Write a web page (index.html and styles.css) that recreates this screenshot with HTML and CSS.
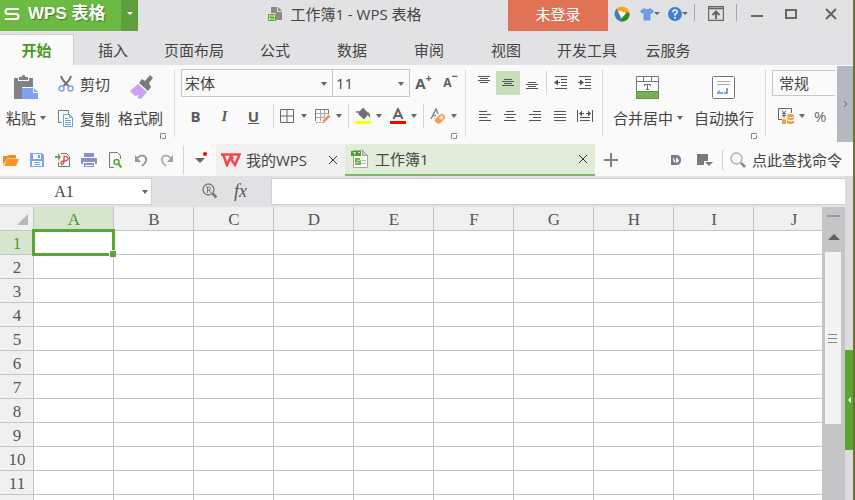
FILE: index.html
```html
<!DOCTYPE html>
<html lang="zh-CN">
<head>
    <meta charset="UTF-8">
    <title>工作簿1 - WPS 表格</title>
    <link rel="stylesheet" href="styles.css">
</head>

<body>

<div class="app">

    <!-- Title bar -->
    <header class="titlebar">
        <button class="brand">
            <svg width="16" height="14" viewBox="0 0 16 14" fill="none" stroke="#fff" stroke-width="2"><path d="M15 2H4Q1.500 2 1.500 4.500T4 7H12Q14.500 7 14.500 9.500T12 12H1"/></svg>
            WPS 表格
        </button>
        <button class="brand-menu" aria-label="菜单"><span class="caret light"></span></button>
        <div class="doc-title">
            <svg width="16" height="16" viewBox="0 0 16 16"><path fill="#8a8a8a" d="M3 1h6v5h5v8H8V7H3zM10 1l4 4h-4z"/><path fill="#e2edda" stroke="#5aa632" d="M.5 8.500h7v6h-7z"/><path fill="none" stroke="#5aa632" d="M6 10H2v1.500h4V13H2"/></svg>
            <span>工作簿1 - WPS 表格</span>
        </div>
        <button class="login">未登录</button>
        <div class="title-tools">
            <button aria-label="云办公">
                <svg width="16" height="16" viewBox="0 0 16 16"><circle cx="8" cy="8" r="7.500" fill="#f7a51c"/><path fill="#2f80c8" d="M3 2.500A7.500 7.500 0 0 0 6 15L8 12 4 7z"/><path fill="#278a24" d="M6 15.200A7.500 7.500 0 0 0 15.500 7L12 6z"/><path fill="#fff" d="M4.500 4.500 12.500 7 7 12.500z"/></svg>
            </button>
            <button aria-label="皮肤">
                <svg width="14" height="14" viewBox="0 0 14 14"><path fill="#6f9be6" d="M4 1q3 2.500 6 0l4 3-2 3-1.500-1v7.500h-7V6L2 7 0 4z"/></svg>
                <span class="caret"></span>
            </button>
            <button aria-label="帮助">
                <svg width="14" height="14" viewBox="0 0 14 14"><circle cx="7" cy="7" r="7" fill="#3d7fd6"/><path d="M4.800 5.300Q5 3 7 3t2.200 2Q9.200 6.200 7 7.200v1.500" fill="none" stroke="#fff" stroke-width="1.500"/><circle cx="7" cy="10.700" r="1" fill="#fff"/></svg>
                <span class="caret"></span>
            </button>
            <i class="sep"></i>
            <button class="wide" aria-label="隐藏功能区">
                <svg width="16" height="15" viewBox="0 0 16 15" fill="none" stroke="#666"><path d="M.5.500h15v14H.5zM1 2.500h14" stroke-width="1.300"/><path d="M8 13V6M4.500 9 8 5.500 11.500 9" stroke-width="2"/></svg>
            </button>
            <i class="sep"></i>
            <div class="window-buttons">
                <button aria-label="最小化">
                    <svg width="12" height="12" viewBox="0 0 12 12"><path fill="#666" d="M0 7h12v2H0z"/></svg>
                </button>
                <button aria-label="最大化">
                    <svg width="12" height="12" viewBox="0 0 12 12"><path fill="none" stroke="#666" stroke-width="2" d="M1 2h10v8H1z"/></svg>
                </button>
                <button class="close" aria-label="关闭">
                    <svg width="12" height="12" viewBox="0 0 12 12"><path stroke="#666" stroke-width="2" d="m1 1 10 10M11 1 1 11"/></svg>
                </button>
            </div>
        </div>
    </header>

    <nav class="tabs">
        <button class="tab active">开始</button>
        <button class="tab">插入</button>
        <button class="tab">页面布局</button>
        <button class="tab">公式</button>
        <button class="tab">数据</button>
        <button class="tab">审阅</button>
        <button class="tab">视图</button>
        <button class="tab">开发工具</button>
        <button class="tab">云服务</button>
    </nav>

    <!-- Ribbon -->
    <div class="ribbon">
        <section class="group clipboard">
            <button class="big">
                <svg width="26" height="26" viewBox="0 0 26 26"><path fill="#828282" d="M1 4h4v3h11V4h4v9H9v12H1z"/><path fill="#828282" d="M6 3h2.500Q8.500 1 10.500 1t2 2H15v3H6z"/><path fill="#7da3ec" d="M9 14h12l4 4v7H9z"/><path fill="#fafafa" d="M20 12.500h1V18h5v1h-6z"/></svg>
                <span>粘贴<i class="caret"></i></span>
            </button>
            <div class="stack">
                <button class="small">
                    <svg width="16" height="18" viewBox="0 0 16 18" fill="none"><path stroke="#707070" stroke-width="2" d="M3 1q1 4 7.500 10M13 1q-1 4-7.500 10"/><circle cx="3.500" cy="13.500" r="2.500" stroke="#7da3ec" stroke-width="1.500"/><circle cx="12.500" cy="13.500" r="2.500" stroke="#7da3ec" stroke-width="1.500"/></svg>
                    剪切
                </button>
                <button class="small">
                    <svg width="16" height="18" viewBox="0 0 16 18" fill="none"><path stroke="#777" d="M3.500 12.500h-3V.5h10v3"/><path fill="#fff" stroke="#6f9be6" d="M5.500 4.500h6l3 3v9h-9zM11.500 4.500v3h3M7 8.500h3M7 10.500h6M7 12.500h6M7 14.500h6"/></svg>
                    复制
                </button>
            </div>
            <button class="big">
                <svg width="26" height="26" viewBox="0 0 26 26"><path fill="#7a7a7a" d="m11 9 3-4 3 2 5-6 3 3-4 5 2 4-3 4z"/><path fill="#caa2f0" d="m10 10 9 8-6 7-4-1 2-3-4 1-5-5z"/></svg>
                <span>格式刷</span>
            </button>
            <svg class="launcher" width="6" height="6" viewBox="0 0 6 6"><path fill="none" stroke="#888" d="M.5 6V.5H6M5.500 2v3.500H2"/></svg>
        </section>

        <section class="group font">
            <div class="row boxes">
                <label class="drop family"><select aria-label="字体"><option>宋体</option></select><i class="caret"></i></label>
                <label class="drop size"><select aria-label="字号"><option>11</option></select><i class="caret"></i></label>
                <button class="grow">A<sup>+</sup></button>
                <button class="grow less">A<sup>−</sup></button>
            </div>
            <div class="row format">
                <button class="letter bold">B</button>
                <button class="letter italic">I</button>
                <button class="letter underline">U</button>
                <i class="sep"></i>
                <button class="split" aria-label="边框">
                    <svg width="16" height="16" viewBox="0 0 16 16"><path fill="none" stroke="#666" d="M.5 1.500h13v13H.5zM7 2v12M1 8h12"/></svg>
                    <i class="caret"></i>
                </button>
                <button class="split" aria-label="绘图边框">
                    <svg width="16" height="16" viewBox="0 0 16 16" fill="none"><path stroke="#777" d="M.5 13V1.500h13V6"/><path stroke="#aaa" d="M5.500 2v11M9.500 2v7M1 5.500h12M1 9.500h9"/><path stroke="#f08a4a" d="M1 14.500h8" stroke-dasharray="2 1"/><path stroke="#f08a4a" stroke-width="2.500" d="m14.500 7.500-6 6"/></svg>
                    <i class="caret"></i>
                </button>
                <i class="sep"></i>
                <button class="split" aria-label="填充颜色">
                    <svg width="16" height="16" viewBox="0 0 16 16"><path fill="#707070" d="M8 0 14 5.500 9 11.500 3 6zM13 4q3 2 2 6l-2-3z"/><path fill="none" stroke="#707070" stroke-width="1.500" d="M1 4h4l4-4"/><path fill="#ff0" d="M0 13h16v3H0z"/></svg>
                    <i class="caret"></i>
                </button>
                <button class="split" aria-label="字体颜色">
                    <svg width="16" height="16" viewBox="0 0 16 16"><path fill="none" stroke="#666" stroke-width="2" d="M3.500 11 8 1l4.500 10M5 8h6"/><path fill="red" d="M0 13h16v3H0z"/></svg>
                    <i class="caret"></i>
                </button>
                <i class="sep"></i>
                <button class="split" aria-label="清除">
                    <svg width="16" height="16" viewBox="0 0 16 16"><path fill="none" stroke="#8a8a8a" stroke-width="1.500" d="M1 11 6 1l2 5M3 7.500h3"/><path fill="#fbe3c4" stroke="#efa04a" stroke-width="1.500" d="m5.500 12 5-5q1.500-1 3 .5t.5 3l-4 4q-2 1-3.500-.5t-1-2z"/><path fill="#efa04a" d="m5.500 12 3-3 3.500 3.500-2.500 2.500H7z"/></svg>
                    <i class="caret"></i>
                </button>
            </div>
            <svg class="launcher" width="6" height="6" viewBox="0 0 6 6"><path fill="none" stroke="#888" d="M.5 6V.5H6M5.500 2v3.500H2"/></svg>
        </section>

        <section class="group align">
            <div class="row boxes">
                <button class="icon top" aria-label="顶端对齐"><svg width="12" height="12" viewBox="0 0 12 12"><path stroke="#555" d="M0 .5h12M2 2.500h8M0 4.500h12M2 6.500h8"/></svg></button>
                <button class="icon on" aria-label="垂直居中"><svg width="12" height="12" viewBox="0 0 12 12"><path stroke="#555" d="M2 2.500h8M0 4.500h12M2 6.500h8M0 8.500h12"/></svg></button>
                <button class="icon" aria-label="底端对齐"><svg width="12" height="12" viewBox="0 0 12 12"><path stroke="#555" d="M2 5.500h8M0 7.500h12M2 9.500h8M0 11.500h12"/></svg></button>
                <i class="sep"></i>
                <button class="icon" aria-label="减少缩进"><svg width="14" height="14" viewBox="0 0 14 14"><path stroke="#555" d="M1 .5h12M7 3.500h6M7 6.500h6M7 9.500h6M1 12.500h12M2 6.500h4"/><path fill="#555" d="m0 6.500 4-3v6z"/></svg></button>
                <button class="icon" aria-label="增加缩进"><svg width="14" height="14" viewBox="0 0 14 14"><path stroke="#555" d="M1 .5h12M7 3.500h6M7 6.500h6M7 9.500h6M1 12.500h12M0 6.500h4"/><path fill="#555" d="m6 6.500-4-3v6z"/></svg></button>
            </div>
            <div class="row format">
                <button class="icon" aria-label="左对齐"><svg width="12" height="12" viewBox="0 0 12 12"><path stroke="#555" d="M0 1.500h8M0 4.500h12M0 7.500h8M0 10.500h12"/></svg></button>
                <button class="icon" aria-label="居中"><svg width="12" height="12" viewBox="0 0 12 12"><path stroke="#555" d="M2 1.500h8M0 4.500h12M2 7.500h8M0 10.500h12"/></svg></button>
                <button class="icon" aria-label="右对齐"><svg width="12" height="12" viewBox="0 0 12 12"><path stroke="#555" d="M4 1.500h8M0 4.500h12M4 7.500h8M0 10.500h12"/></svg></button>
                <button class="icon" aria-label="两端对齐"><svg width="12" height="12" viewBox="0 0 12 12"><path stroke="#555" d="M0 1.500h12M0 4.500h12M0 7.500h12M0 10.500h12"/></svg></button>
                <button class="icon" aria-label="分散对齐"><svg width="16" height="12" viewBox="0 0 16 12"><path stroke="#555" d="M.5 0v12M15.500 0v12M3 3.500h4M9 3.500h4M3 7.500h10M3 10.500h10"/><path fill="#555" d="m2 3.500 3-3v6zM14 3.500l-3-3v6z"/></svg></button>
            </div>
        </section>

        <section class="group merge">
            <button class="big">
                <svg width="26" height="26" viewBox="0 0 26 26"><path fill="#fff" stroke="#777" d="M1.500 2.500h22v16h-22zM2 7.500h21M8.500 3v4M16.500 3v4"/><path fill="#78ad5c" stroke="#5c9640" d="M1.500 17.500h22v7h-22z"/><path fill="none" stroke="#666" d="M9.500 12v-1.500h6V12M12.500 10v6M11 15.500h3"/></svg>
                <span>合并居中<i class="caret"></i></span>
            </button>
            <button class="big">
                <svg width="26" height="26" viewBox="0 0 26 26"><rect x="1.500" y="2.500" width="22" height="22" rx="1" fill="#fff" stroke="#777"/><path stroke="#aaa" d="M6 7.500h13M6 10.500h13"/><path fill="#7da3ec" d="M6 20v-2l3-2v2h3v2zM13 18h2v-4h2v6h-4z"/></svg>
                <span>自动换行</span>
            </button>
            <svg class="launcher" width="6" height="6" viewBox="0 0 6 6"><path fill="none" stroke="#888" d="M.5 6V.5H6M5.500 2v3.500H2"/></svg>
        </section>

        <section class="group number">
            <div class="row boxes">
                <label class="drop style"><select aria-label="数字格式"><option>常规</option></select></label>
            </div>
            <div class="row format">
                <button class="split" aria-label="货币">
                    <svg width="16" height="16" viewBox="0 0 16 16" fill="none"><path stroke="#666" d="M4 11.500H.5V.5h13V5M4 2.500 6 5l2-2.500M6 5v5M4 5.500h4M4 7.500h4"/><g fill="#f09a3c"><ellipse cx="12.500" cy="7.500" rx="3.500" ry="1.500"/><path d="M9 9q3.500 2 7 0v2q-3.500 2-7 0zM9 12.500q3.500 2 7 0V15q-3.500 2-7 0zM4 12q2-2 4 0v3.500q-2 1-4 0z"/></g></svg>
                    <i class="caret"></i>
                </button>
                <button class="percent">%</button>
            </div>
        </section>

        <button class="ribbon-next" aria-label="更多">
            <svg width="5" height="8" viewBox="0 0 5 8"><path fill="none" stroke="#666" d="m1 1 3 3-3 3"/></svg>
        </button>
    </div>

    <!-- Quick access and document tabs -->
    <div class="quickbar">
        <div class="quick">
            <button aria-label="打开"><svg width="16" height="14" viewBox="0 0 16 14"><path fill="#f08c1e" d="M0 12V3h5l1-1h7v4H4z"/><path fill="#fb922a" d="M4 6h12l-3 7H1z"/><path stroke="#ffd49c" d="M4 5.500h10"/></svg></button>
            <button aria-label="保存"><svg width="16" height="16" viewBox="0 0 16 16"><path fill="#7da3ec" d="M1 1h12l2 2v12H1z"/><path fill="#fff" d="M4 2h8v5H4zM3 9h10v5H3z"/><path fill="#7da3ec" d="M9 3h2v3H9zM5 10h6v1H5zM5 12h6v1H5z"/></svg></button>
            <button aria-label="输出为PDF"><svg width="16" height="16" viewBox="0 0 16 16" fill="none"><path stroke="#777" d="M6 1.500h5.500l3 3v10h-11V10"/><path stroke="#d84a4a" stroke-width="1.300" d="M6 12.500q3 0 3-3.500V4.500q4-.5 4 2t-4 2.500q-3 0-3 3"/><path fill="#6aa84f" d="M0 4h3V1l3 4-3 4V6H0z"/></svg></button>
            <button aria-label="打印"><svg width="16" height="14" viewBox="0 0 16 14"><path fill="#8f8fc8" d="M3 0h10v4H3zM0 5h16v6h-2V9H2v2H0zM3 10h10v4H3z"/><path stroke="#fafafa" d="M4 12.500h8"/></svg></button>
            <button aria-label="打印预览"><svg width="16" height="16" viewBox="0 0 16 16" fill="none"><path stroke="#777" d="M7 15.500H2.500V.5h8l3 3V7"/><circle cx="9.500" cy="10" r="2.500" stroke="#5aa632" stroke-width="1.500"/><path stroke="#5aa632" stroke-width="2" d="m11.500 12 3 3.500"/></svg></button>
            <button aria-label="撤销"><svg width="14" height="14" viewBox="0 0 14 14"><path fill="none" stroke="#999" stroke-width="2" d="M3 5q6-5 9 0 1 4-4 8"/><path fill="#999" d="M1 2v7h6z"/></svg></button>
            <button aria-label="恢复"><svg width="14" height="14" viewBox="0 0 14 14"><path fill="none" stroke="#b0b0b0" stroke-width="2" d="M11 5Q5 0 2 5q-1 4 4 8"/><path fill="#a0a0a0" d="M13 2v7H7z"/></svg></button>
        </div>
        <i class="sep"></i>
        <button class="quick-more" aria-label="自定义"><i class="caret wide"></i></button>
        <div class="doc-tab">
            <svg width="20" height="14" viewBox="0 0 20 14"><path fill="none" stroke="#ef4848" stroke-width="2.500" d="M0 1.500h18.500L14 12l-4-6M2 1l4 11 4-9 2 3"/></svg>
            <span>我的WPS</span>
            <button aria-label="关闭"><svg width="10" height="10" viewBox="0 0 10 10"><path stroke="#333" d="m1 1 8 8M9 1 1 9"/></svg></button>
        </div>
        <div class="doc-tab current">
            <svg width="20" height="20" viewBox="0 0 20 20"><path fill="#fff" stroke="#a8a8a8" d="M3.500 1.500h9l5 5v12h-14z"/><path fill="#d0d0d0" stroke="#999" d="M12.500 1.500v5h5z"/><path fill="#4d9e2e" d="M1 2h10v5H1z"/><path fill="none" stroke="#cfe8c0" d="M3 3.500h3M4.500 4v2M8 3.500h2"/><path fill="none" stroke="#6fb54c" stroke-width="2" d="M10 10H6v2.500h4V15H5"/><path stroke="#bbb" d="M11 11.500h5M11 14.500h5"/></svg>
            <span>工作簿1</span>
            <button aria-label="关闭"><svg width="10" height="10" viewBox="0 0 10 10"><path stroke="#333" d="m1 1 8 8M9 1 1 9"/></svg></button>
        </div>
        <button class="new-tab" aria-label="新建"><svg width="14" height="14" viewBox="0 0 14 14"><path stroke="#808080" stroke-width="2" d="M7 0v14M0 7h14"/></svg></button>
        <div class="search">
            <button aria-label="稻壳"><svg width="10" height="10" viewBox="0 0 10 10"><path fill="#737b8b" d="M0 0h5q5 0 5 5t-5 5H0z"/><path fill="#fff" d="M2 2q2 2 2 6-2-1-2-6zM6 2q2 3-1 6-1-3 1-6zM8 4q0 3-2 4 0-3 2-4z"/></svg></button>
            <button aria-label="窗口"><svg width="16" height="14" viewBox="0 0 16 14"><path fill="#7a7a7a" d="M0 1h11v7H7v4H0zM8 9h8l-4 4z"/></svg></button>
            <i class="sep"></i>
            <button class="find"><svg width="16" height="16" viewBox="0 0 16 16" fill="none"><circle cx="6.500" cy="6.500" r="5.500" stroke="#aaa" stroke-width="1.300"/><path stroke="#888" stroke-width="2.500" d="m11 11 4 4"/></svg>点此查找命令</button>
        </div>
    </div>

    <div class="work">
        <div class="sheet">
            <!-- Formula bar -->
            <div class="formula">
                <label class="name-box"><input type="text" value="A1" aria-label="名称框"><i class="caret"></i></label>
                <button aria-label="查找"><svg width="16" height="16" viewBox="0 0 16 16" fill="none"><circle cx="6.500" cy="6.500" r="5.500" stroke="#777" stroke-width="1.300"/><path stroke="#777" stroke-width="2.500" d="m10.500 10.500 4 4"/><path stroke="#777" d="M5.500 10V4H7q1.500 0 1.500 1.500T7 7H5.500M7 7l2 3M4 4h1.500"/></svg></button>
                <button class="fx">fx</button>
                <input type="text" class="formula-input" aria-label="编辑栏">
            </div>
            <div class="grid-area">
                <div class="grid-wrap">
                    <table class="grid">
                        <thead><tr id="columns"><th class="corner"></th></tr></thead>
                        <tbody id="rows"></tbody>
                    </table>
                </div>
                <div class="scroll">
                    <i class="split-line"></i>
                    <i class="up"></i>
                    <div class="thumb"><i></i></div>
                </div>
            </div>
        </div>
        <aside class="dock">
            <button aria-label="展开任务窗格"></button>
        </aside>
    </div>
</div>

<script src="script.js"></script>
</body>
</html>
```

FILE: styles.css
```css
* {
    box-sizing: border-box;
}
body {
    margin: 0;
    height: 100vh;
    overflow: hidden;
    background-color: #74702f;
    padding-right: 2px;
    font-family: "Open Sans", "Noto Sans CJK SC", sans-serif;
    font-size: 15px;
    line-height: 20px;
    color: #444;
}
button, input, select {
    font: inherit;
    color: inherit;
    margin: 0;
    padding: 0;
    border: none;
    border-radius: 0;
    background: none;
    outline: none;
}
button {
    display: flex;
    align-items: center;
    justify-content: center;
    white-space: nowrap;
}
svg {
    display: block;
    flex: none;
}
.app {
    display: flex;
    flex-direction: column;
    height: 100%;
    background-color: #e2e2e4;
}
.caret {
    display: inline-block;
    flex: none;
    border: 3px solid transparent;
    border-top: 4px solid #666;
    border-bottom: none;
}
.caret.light {
    border-top: 3px solid #fff;
}
.caret.wide {
    border-width: 5px;
    border-bottom: none;
}
.sep {
    flex: none;
    width: 1px;
    background-color: #d4d4d6;
}

/* title bar */
.titlebar {
    display: flex;
    height: 31px;
    flex: none;
}
.brand {
    width: 121px;
    padding: 0 0 4px 4px;
    gap: 8px;
    justify-content: flex-start;
    background-color: #6cb944;
    color: #fff;
    font-family: "Liberation Sans", "Noto Sans CJK SC", sans-serif;
    font-size: 17px;
    font-weight: bold;
    text-shadow: 1px 1px 1px #3f7a22;
}
.brand-menu {
    width: 17px;
    padding-bottom: 4px;
    background-color: #5ea03c;
}
.doc-title {
    flex: 1;
    display: flex;
    align-items: center;
    justify-content: center;
    gap: 6px;
    padding: 0 0 4px 44px;
}
.login {
    width: 100px;
    padding-bottom: 4px;
    background-color: #e07355;
    color: #fff;
}
.title-tools {
    display: flex;
    padding: 0 16px 4px 0;
}
.title-tools button {
    width: 28px;
}
.title-tools .caret {
    border-top-width: 3px;
}
.title-tools .sep {
    height: 17px;
    margin: 4px 2px;
    background-color: #a8a8aa;
}
.title-tools .wide {
    width: 37px;
}
.window-buttons {
    display: flex;
    gap: 22px;
    padding-left: 12px;
}
.window-buttons button {
    width: 12px;
}
.window-buttons .close {
    margin-left: 6px;
}

/* ribbon tabs */
.tabs {
    display: flex;
    flex: none;
    height: 34px;
    padding-top: 3px;
}
.tab {
    min-width: 77px;
    padding: 0 12px 0 13px;
}
.tab.active {
    min-width: 74px;
    padding: 0 13px;
    background-color: #fafafa;
    border-top: 1px solid #d0d0d2;
    border-right: 1px solid #d0d0d2;
    color: #4a9a22;
    font-weight: bold;
}

/* ribbon */
.ribbon {
    display: flex;
    flex: none;
    height: 77px;
    overflow: hidden;
    background-color: #fafafa;
}
.group {
    position: relative;
    flex: none;
    display: flex;
    height: 68px;
    margin-top: 4px;
    border-right: 1px solid #dcdcde;
}
.launcher {
    position: absolute;
    right: 8px;
    bottom: -2px;
}
.big {
    flex-direction: column;
    justify-content: flex-start;
    gap: 8px;
    padding-top: 5px;
}
.big .caret {
    margin-left: 4px;
    vertical-align: 4px;
}
.clipboard {
    width: 175px;
    padding-left: 6px;
}
.clipboard .stack {
    margin: 0 8px 0 12px;
}
.small {
    height: 35px;
    gap: 6px;
    padding-bottom: 6px;
}
.font {
    flex-direction: column;
    width: 291px;
    padding-left: 6px;
}
.row {
    display: flex;
    align-items: center;
}
.boxes {
    height: 28px;
}
.format {
    height: 24px;
    margin-top: 7px;
}
.format > * {
    flex: none;
}
.drop {
    position: relative;
    height: 28px;
    border: 1px solid #c8c8ca;
}
.drop select {
    appearance: none;
    width: 100%;
    height: 100%;
    padding-left: 3px;
}
.drop .caret {
    position: absolute;
    right: 5px;
    top: 12px;
    pointer-events: none;
}
.family {
    width: 152px;
}
.size {
    width: 77px;
    border-left: none;
}
.grow {
    width: 27px;
    align-items: baseline;
    color: #5c5c5c;
    font-weight: bold;
    font-size: 15px;
}
.grow sup {
    font-size: 11px;
    line-height: 0;
    vertical-align: 0;
    position: relative;
    top: -7px;
}
.grow.less {
    font-size: 12px;
}
.letter {
    width: 29px;
    color: #5c5c5c;
    font-weight: bold;
}
.italic {
    font-family: "Liberation Serif", serif;
    font-style: italic;
}
.underline {
    text-decoration: underline;
}
.font .sep {
    height: 24px;
    margin: 0 6px 0 5px;
}
.split {
    gap: 5px;
    padding-right: 1px;
}
.split + .split {
    margin-left: 7px;
}
.align {
    flex-direction: column;
    width: 137px;
    padding-left: 6px;
}
.icon {
    width: 24px;
    height: 24px;
}
.format .icon {
    width: 25px;
}
.icon.on {
    background-color: #c5e0b8;
}
.icon.top {
    padding-bottom: 2px;
}
.align .sep {
    height: 24px;
    margin: 0 2px;
}
.merge {
    width: 163px;
    padding-left: 10px;
    gap: 11px;
}
.number {
    flex: 1;
    flex-direction: column;
    min-width: 0;
    overflow: hidden;
    padding-left: 6px;
    border-right: none;
}
.style {
    flex: 1;
    height: 26px;
    border-right: none;
}
.style select {
    padding-left: 6px;
}
.number .format {
    padding-left: 6px;
}
.percent {
    margin-left: 8px;
    color: #666;
}
.ribbon-next {
    width: 16px;
    flex: none;
    margin: 1px 0 0 2px;
    background-color: #b5b8c0;
}

/* quick access bar */
.quickbar {
    display: flex;
    align-items: center;
    flex: none;
    height: 34px;
    padding-top: 2px;
    background-color: #fafafa;
}
.quick {
    display: flex;
    gap: 10px;
    padding: 0 8px 0 3px;
}
.quick button {
    width: 16px;
}
.quickbar .sep {
    height: 28px;
}
.quick-more {
    position: relative;
    width: 32px;
    height: 20px;
}
.quick-more::after {
    content: "";
    position: absolute;
    right: 9px;
    top: 2px;
    width: 4px;
    height: 4px;
    border-radius: 50%;
    background-color: #f00;
}
.doc-tab {
    display: flex;
    align-items: center;
    gap: 5px;
    width: 129px;
    height: 32px;
    padding: 0 7px 0 5px;
    background-color: #f0f0f0;
}
.doc-tab button {
    margin-left: auto;
}
.doc-tab.current {
    width: 250px;
    border-bottom: 2px solid #7fb868;
    background-color: #e2edd9;
}
.new-tab {
    width: 32px;
}
.search {
    display: flex;
    align-items: center;
    gap: 9px;
    margin-left: auto;
    padding-right: 11px;
}
.search button:first-child {
    margin-right: 7px;
}
.search .sep {
    height: 20px;
}
.find {
    gap: 6px;
    margin-left: -2px;
}

/* formula bar */
.work {
    display: flex;
    flex: 1;
    min-height: 0;
}
.sheet {
    display: flex;
    flex-direction: column;
    flex: 1;
    min-width: 0;
}
.formula {
    display: flex;
    flex: none;
    height: 31px;
    padding: 2px 0;
}
.name-box {
    position: relative;
    width: 152px;
    margin-right: 42px;
    border: 1px solid #d0d0d6;
    border-left: none;
    background-color: #fff;
}
.name-box input {
    width: 128px;
    height: 100%;
    text-align: center;
    font-family: "Liberation Serif", serif;
    font-size: 16px;
}
.name-box .caret {
    position: absolute;
    right: 3px;
    top: 11px;
}
.formula button {
    width: 31px;
    padding-bottom: 2px;
}
.fx {
    color: #555;
    font-family: "Liberation Serif", serif;
    font-size: 18px;
    font-style: italic;
}
.formula-input {
    flex: 1;
    min-width: 0;
    margin-left: 15px;
    padding: 0 6px;
    border: 1px solid #d0d0d6;
    border-right: none;
    background-color: #fff;
}

/* cells */
.grid-area {
    display: flex;
    flex: 1;
    min-height: 0;
}
.grid-wrap {
    flex: 1;
    overflow: hidden;
    background-color: #fff;
}
.grid {
    width: 834px;
    table-layout: fixed;
    border-collapse: separate;
    border-spacing: 0;
    font-family: "Liberation Serif", serif;
    font-size: 17px;
    color: #555;
}
.grid th, .grid td {
    height: 24px;
    padding: 0;
    border-right: 1px solid #c4c4c4;
    border-bottom: 1px solid #c4c4c4;
}
.grid th {
    padding: 3px 0 0 1px;
    background-color: #f0f0f0;
    font-weight: normal;
}
.grid th.on {
    background-color: #d6e6ce;
    color: #4a9a22;
}
.grid .corner {
    position: relative;
    width: 34px;
}
.corner::after {
    content: "";
    position: absolute;
    right: 5px;
    bottom: 5px;
    border-left: 11px solid transparent;
    border-bottom: 11px solid #b8b8b8;
}
.cell-on {
    position: relative;
}
.cell-on::before {
    content: "";
    position: absolute;
    inset: -2px;
    border: 3px solid #5aa632;
}
.cell-on::after {
    content: "";
    position: absolute;
    right: -3px;
    bottom: -3px;
    width: 6px;
    height: 6px;
    border: solid #fff;
    border-width: 1px 0 0 1px;
    background-color: #5aa632;
}

/* scroll bar */
.scroll {
    display: flex;
    flex-direction: column;
    align-items: center;
    width: 23px;
    background-color: #c5c5c7;
}
.split-line {
    width: 13px;
    height: 2px;
    margin: 8px 0 17px;
    background-color: #999;
}
.up {
    border: 6px solid transparent;
    border-bottom-color: #606060;
    border-top: none;
    margin-bottom: 12px;
}
.thumb {
    display: flex;
    align-items: center;
    justify-content: center;
    width: 16px;
    height: 69%;
    max-height: 172px;
    margin-right: 2px;
    background-color: #f3f3f3;
}
.thumb i {
    width: 9px;
    height: 9px;
    border: solid #888;
    border-width: 1px 0;
    background: linear-gradient(#888, #888) center / 9px 1px no-repeat;
}
.dock {
    display: flex;
    flex-direction: column;
    width: 8px;
    padding-top: 174px;
    background-color: #dcdce0;
}
.dock button {
    height: 100px;
    background-color: #5aa632;
}
.dock button::before {
    content: "";
    border: 3px solid transparent;
    border-right-color: #fff;
    border-left: none;
}
```

FILE: script.js
```js
const columns = ['A', 'B', 'C', 'D', 'E', 'F', 'G', 'H', 'I', 'J'];
const rowCount = 11;

const head = document.getElementById('columns');
columns.forEach((name, index) => {
    const th = document.createElement('th');
    th.textContent = name;
    if (index === 0) th.className = 'on';
    head.appendChild(th);
});

const body = document.getElementById('rows');

function addRow(label) {
    const tr = document.createElement('tr');
    tr.innerHTML = `<th class="${label === 1 ? 'on' : ''}">${label}</th>` + columns.map(() => '<td></td>').join('');
    body.appendChild(tr);
}

for (let row = 1; row <= rowCount; row++) {
    addRow(row);
}
addRow(''); // half-visible row at the bottom

// A1 is selected when the workbook opens
body.querySelector('td').className = 'cell-on';
```
